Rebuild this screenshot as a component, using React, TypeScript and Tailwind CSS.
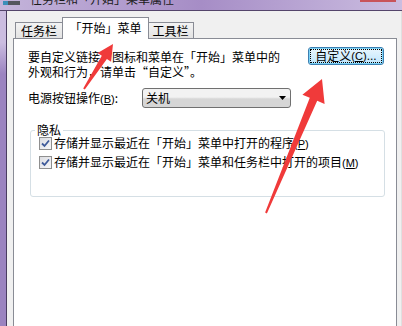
const cjk = "font-['Noto_Sans_CJK_SC','Noto_Sans',sans-serif]";

function Key({ k }: { k: string }) {
  return (
    <span className="font-['Liberation_Sans',sans-serif] text-[11px]">
      (<span className="underline">{k}</span>)
    </span>
  );
}

function Check({ children }: { children: React.ReactNode }) {
  return (
    <div className="flex h-[19px] items-center gap-[2px]">
      <div className="flex h-[13px] w-[13px] items-center justify-center border border-[#8f8f8f] bg-gradient-to-br from-[#dcdde2] to-[#f7f7f9]">
        <svg width="9" height="9" viewBox="0 0 9 9">
          <path d="M1 4.5 L3.5 7 L8 1.5" fill="none" stroke="#3e5a9a" strokeWidth="1.8" />
        </svg>
      </div>
      <span className="leading-[15px]">{children}</span>
    </div>
  );
}

function Arrows() {
  return (
    <svg className="pointer-events-none absolute inset-0" width="402" height="326" viewBox="0 0 402 326">
      <polygon
        fill="#f03a3a"
        points="84.8,89.5 106.9,59.1 111.1,61.8 113,44 97.6,53.1 101.8,55.8 83.2,88.5"
      />
      <polygon
        fill="#f03a3a"
        points="266.9,213.4 317.2,100.8 324.6,103.9 322,79 302.4,94.7 309.8,97.8 265.1,212.6"
      />
    </svg>
  );
}

export default function App() {
  return (
    <div className={`relative flex h-[326px] w-[402px] flex-col overflow-hidden text-[12px] text-black ${cjk}`}>
      {/* title bar, cropped at the top */}
      <div className="relative flex h-[10px] items-start overflow-hidden bg-gradient-to-r from-[#c4b4da] via-[#a68dc6] to-[#cbbde0]">
        <div className="absolute right-[6px] top-0 h-[2px] w-[36px] bg-[#c8545a]" />
        <div className="ml-[3px] flex h-[5px] items-end">
          <div className="h-[4px] w-[5px] bg-[#3b8fb9]" />
          <div className="h-[4px] w-[12px] bg-[#55565e]" />
        </div>
        <span className="ml-[10px] -mt-[7px] whitespace-nowrap leading-[12px] text-[12px] text-[#1b1b1b]">任务栏和「开始」菜单属性</span>
      </div>
      <div className="h-px bg-[#54456b]" />

      <div className="flex flex-1">
        <div className="w-[6px] bg-gradient-to-b from-[#cbbde0] from-10% to-[#9b84c0] to-20%" />
        <div className="w-px bg-[#4a3d60]" />
        <div className="flex flex-1 flex-col bg-[#f0f0f0] pl-[6px] pr-[4px] pt-[6px]">
          {/* tabs */}
          <div className="flex h-[21px] items-end pl-[2px]">
            <div className="flex h-[16px] w-[48px] items-center justify-center border border-b-0 border-[#898c95] bg-gradient-to-b from-[#f3f3f3] to-[#e3e3e3] pt-[1px]">
              任务栏
            </div>
            <div className="relative z-10 -mb-px -ml-px flex h-[22px] w-[87px] items-start justify-center border border-b-0 border-[#898c95] bg-white pt-[1px]">
              「开始」菜单
            </div>
            <div className="-ml-px flex h-[16px] w-[46px] items-center justify-center border border-b-0 border-l-0 border-[#898c95] bg-gradient-to-b from-[#f3f3f3] to-[#e3e3e3] pt-[1px]">
              工具栏
            </div>
          </div>

          {/* panel */}
          <div className="flex w-[384px] flex-1 flex-col border border-b-0 border-[#898c95] bg-white pl-[14px] pr-[12px] pt-[8px]">
            <div className="flex items-start justify-between">
              <div className="mt-[2px] leading-[15px]">
                <div>要自定义链接、图标和菜单在「开始」菜单中的</div>
                <div>外观和行为，请单击“自定义”。</div>
              </div>
              <div className="flex h-[18px] w-[76px] items-center justify-center rounded-[3px] border border-[#3c7fb1] bg-gradient-to-b from-[#eaf6fd] to-[#bee6fd] p-[1px] shadow-[inset_0_0_0_1px_#7cd3f7]">
                <div className="flex h-full w-full items-center justify-center border border-dotted border-black leading-none">
                  自定义<Key k="C" />
                  <span className="font-['Liberation_Sans',sans-serif]">...</span>
                </div>
              </div>
            </div>

            <div className="mt-[9px] flex items-center">
              <div className="w-[114px] pt-[1px]">
                电源按钮操作<Key k="B" />:
              </div>
              <div className="flex h-[20px] w-[149px] items-center justify-between rounded-[3px] border border-[#707070] bg-gradient-to-b from-[#f2f2f2] from-45% to-[#d6d6d6] to-55% pl-[3px] pr-[4px]">
                <span>关机</span>
                <svg width="7" height="4" viewBox="0 0 7 4">
                  <polygon points="0,0 7,0 3.5,4" fill="#000" />
                </svg>
              </div>
            </div>

            <div className="relative ml-[2px] mt-[22px] h-[67px] w-[355px] rounded-[3px] border border-[#d5dfe5] pl-[8px] pt-[3px]">
              <span className="absolute -top-[9px] left-[4px] bg-white px-[2px] leading-[15px]">隐私</span>
              <Check>
                存储并显示最近在「开始」菜单中打开的程序<Key k="P" />
              </Check>
              <Check>
                存储并显示最近在「开始」菜单和任务栏中打开的项目<Key k="M" />
              </Check>
            </div>
          </div>
        </div>
        <div className="w-px bg-[#e0e0e0]" />
      </div>

      <Arrows />
    </div>
  );
}
